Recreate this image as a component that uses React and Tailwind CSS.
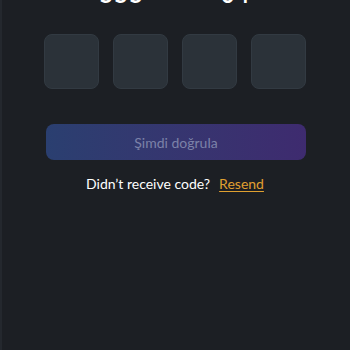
export default function App() {
  const digits = ["", "", "", ""];
  return (
    <div className="w-[350px] h-[350px] overflow-hidden flex flex-col bg-[#1c1f24] border-l-2 border-[#24282e] font-['Lato','Noto_Sans',sans-serif]">
      <div className="-mt-[18px] h-[24px] shrink-0 flex justify-center text-white text-[24px] font-bold leading-[24px] tracking-[1px] pr-[2px]">
        555 *** ** 04
      </div>
      <div className="mt-[28px] flex justify-center gap-[14px] pr-[2px]">
        {digits.map((d, i) => (
          <div
            key={i}
            className="w-[55px] h-[55px] rounded-[8px] bg-[#2b3239] border border-[#323a42]"
          >
            {d}
          </div>
        ))}
      </div>
      <div className="mt-[35px] px-[44px]">
        <button className="w-full h-[36px] rounded-[8px] bg-gradient-to-r from-[#2a3f70] to-[#3e2b6f] text-[#7c82a8] text-[14px]">
          Şimdi doğrula
        </button>
      </div>
      <div className="mt-[13px] flex justify-center items-center gap-[9px] text-[14px] pr-[2px]">
        <span className="text-white">Didn’t receive code?</span>
        <span className="text-[#e0a030] underline underline-offset-2">Resend</span>
      </div>
    </div>
  );
}
